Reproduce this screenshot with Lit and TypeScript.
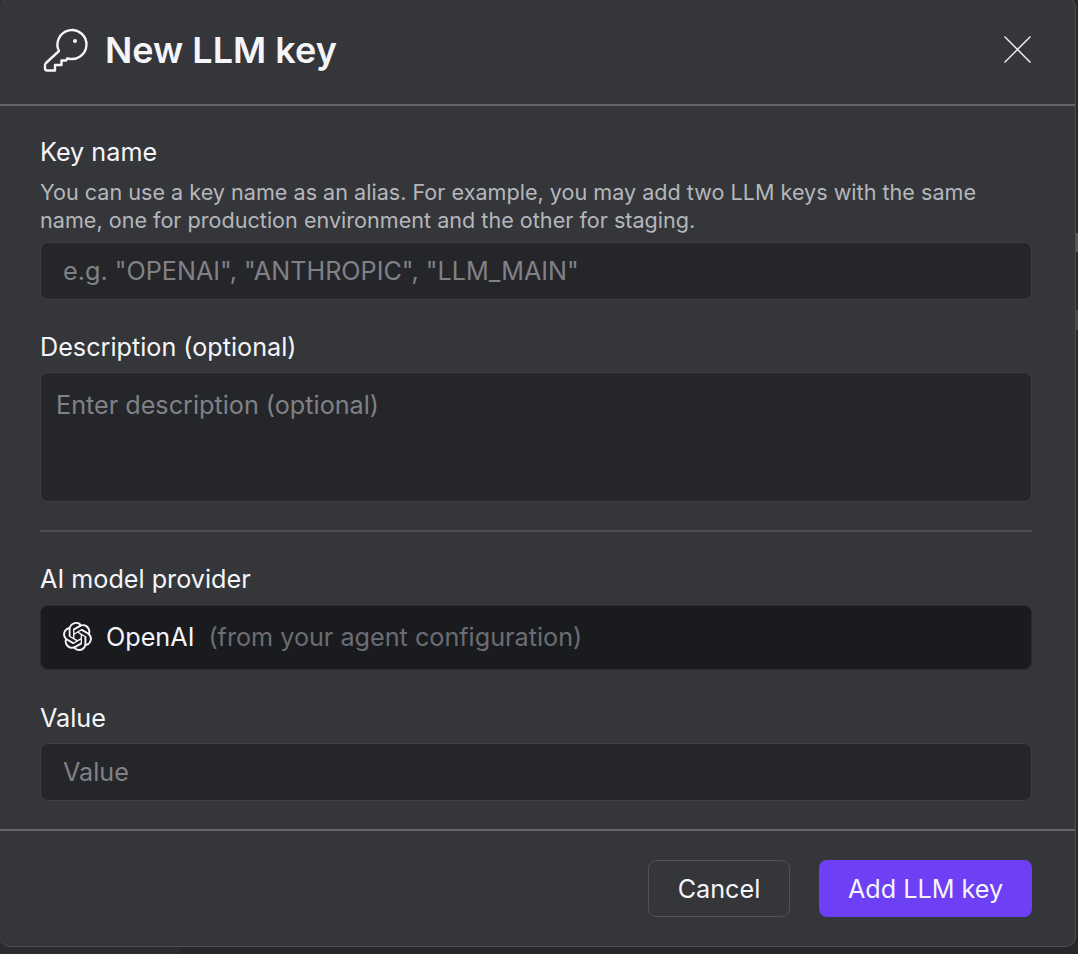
import { LitElement, css, html } from "lit";

const keyIcon = html`<svg class="key" viewBox="0 0 50 50" fill="none" stroke="currentColor" stroke-width="2.4" stroke-linejoin="round">
  <path d="M19 26A14.5 14.5 0 1 1 27.5 33.3L26 35.5H21.5V40H15V45.5H7Q5 45.5 5 43.5V40Q5 39 6 38Z" />
  <circle cx="35" cy="16" r="2" fill="currentColor" stroke="none" />
</svg>`;

const closeIcon = html`<svg class="close" viewBox="0 0 27 27" fill="none" stroke="currentColor" stroke-width="1.4">
  <path d="M.5 .5L26.5 26.5M26.5 .5L.5 26.5" />
</svg>`;

const openAiIcon = html`<svg class="openai" viewBox="0 0 24 24" fill="currentColor">
  <path d="M22.2819 9.8211a5.9847 5.9847 0 0 0-.5157-4.9108 6.0462 6.0462 0 0 0-6.5098-2.9A6.0651 6.0651 0 0 0 4.9807 4.1818a5.9847 5.9847 0 0 0-3.9977 2.9 6.0462 6.0462 0 0 0 .7427 7.0966 5.98 5.98 0 0 0 .511 4.9107 6.051 6.051 0 0 0 6.5146 2.9001A5.9847 5.9847 0 0 0 13.2599 24a6.0557 6.0557 0 0 0 5.7718-4.2058 5.9894 5.9894 0 0 0 3.9977-2.9001 6.0557 6.0557 0 0 0-.7475-7.0729zm-9.022 12.6081a4.4755 4.4755 0 0 1-2.8764-1.0408l.1419-.0804 4.7783-2.7582a.7948.7948 0 0 0 .3927-.6813v-6.7369l2.02 1.1686a.071.071 0 0 1 .038.052v5.5826a4.504 4.504 0 0 1-4.4945 4.4944zm-9.6607-4.1254a4.4708 4.4708 0 0 1-.5346-3.0137l.142.0852 4.783 2.7582a.7712.7712 0 0 0 .7806 0l5.8428-3.3685v2.3324a.0804.0804 0 0 1-.0332.0615L9.74 19.9502a4.4992 4.4992 0 0 1-6.1408-1.6464zM2.3408 7.8956a4.485 4.485 0 0 1 2.3655-1.9728V11.6a.7664.7664 0 0 0 .3879.6765l5.8144 3.3543-2.0201 1.1685a.0757.0757 0 0 1-.071 0l-4.8303-2.7865A4.504 4.504 0 0 1 2.3408 7.872zm16.5963 3.8558L13.1038 8.364 15.1192 7.2a.0757.0757 0 0 1 .071 0l4.8303 2.7913a4.4944 4.4944 0 0 1-.6765 8.1042v-5.6772a.79.79 0 0 0-.407-.667zm2.0107-3.0231l-.142-.0852-4.7735-2.7818a.7759.7759 0 0 0-.7854 0L9.409 9.2297V6.8974a.0662.0662 0 0 1 .0284-.0615l4.8303-2.7866a4.4992 4.4992 0 0 1 6.6802 4.66zM8.3065 12.863l-2.02-1.1638a.0804.0804 0 0 1-.038-.0567V6.0742a4.4992 4.4992 0 0 1 7.3757-3.4537l-.142.0805L8.704 5.459a.7948.7948 0 0 0-.3927.6813zm1.0976-2.3654l2.602-1.4998 2.6069 1.4998v2.9994l-2.5974 1.4997-2.6067-1.4997Z" />
</svg>`;

/** New LLM key dialog */
export class AppRoot extends LitElement {
  override render() {
    return html`
      <section class="dialog">
        <header>
          ${keyIcon}
          <h2>New LLM key</h2>
          <button class="icon-btn" aria-label="Close">${closeIcon}</button>
        </header>

        <form>
          <label for="name">Key name</label>
          <p class="hint">
            You can use a key name as an alias. For example, you may add two LLM keys with the same
            name, one for production environment and the other for staging.
          </p>
          <input id="name" placeholder='e.g. "OPENAI", "ANTHROPIC", "LLM_MAIN"' />

          <label class="desc-label" for="desc">Description (optional)</label>
          <textarea id="desc" placeholder="Enter description (optional)"></textarea>

          <hr />

          <label>AI model provider</label>
          <div class="provider">
            ${openAiIcon}
            <span class="name">OpenAI</span>
            <span class="muted">(from your agent configuration)</span>
          </div>

          <label class="value-label" for="value">Value</label>
          <input id="value" placeholder="Value" />
        </form>

        <footer>
          <button class="btn cancel">Cancel</button>
          <button class="btn primary">Add LLM key</button>
        </footer>
      </section>
    `;
  }

  static override styles = css`
    :host {
      display: block;
      width: 1078px;
      height: 954px;
      overflow: hidden;
      background:
        linear-gradient(#55565c, #55565c) 1076px 233px / 2px 19px no-repeat,
        linear-gradient(#45464b, #45464b) 1076px 310px / 2px 20px no-repeat,
        linear-gradient(to right, #2b2c30 180px, #26272b 180px);
      font-family: Inter, "Liberation Sans", sans-serif;
      color: #f4f5f9;
    }

    .dialog {
      box-sizing: border-box;
      width: 1076px;
      height: 950px;
      margin-top: -3px;
      background: #35363a;
      border: 1px solid #4d4e54;
      border-left: 0;
      border-radius: 10px;
      display: flex;
      flex-direction: column;
    }

    header {
      box-sizing: border-box;
      height: 108px;
      flex: none;
      display: flex;
      align-items: center;
      padding: 0 44px 2px 40px;
      border-bottom: 2px solid #66666f;
    }

    .key {
      width: 50px;
      height: 50px;
      flex: none;
    }

    h2 {
      flex: 1;
      margin: 0 0 0 15px;
      font-size: 36px;
      font-weight: 600;
      line-height: 40px;
    }

    .icon-btn {
      padding: 0;
      border: 0;
      background: none;
      color: #f4f5f9;
      display: flex;
      margin-top: -1px;
    }

    .close {
      width: 27px;
      height: 27px;
    }

    form {
      flex: 1;
      display: flex;
      flex-direction: column;
      padding: 30px 43px 0 40px;
    }

    label {
      font-size: 25.2px;
      line-height: 32px;
      font-weight: 400;
    }

    .hint {
      margin: 10px 0 8px;
      font-size: 21.6px;
      line-height: 28px;
      color: #b4b6bc;
    }

    input,
    textarea {
      box-sizing: border-box;
      width: 100%;
      display: block;
      background: #25262a;
      border: 1px solid #3e3f44;
      border-radius: 8px;
      color: #f4f5f9;
      font: 400 25.2px/32px Inter, "Liberation Sans", sans-serif;
      outline: none;
    }

    input {
      height: 58px;
      padding: 0 22px;
    }

    textarea {
      height: 130px;
      padding: 16px 15px 14px;
      resize: none;
    }

    ::placeholder {
      color: #808186;
      opacity: 1;
    }

    .desc-label {
      margin: 31px 0 9px;
    }

    hr {
      width: 100%;
      height: 2px;
      margin: 28px 0 31px;
      border: 0;
      background: #4d4e54;
    }

    .provider {
      box-sizing: border-box;
      height: 65px;
      margin-top: 10px;
      padding: 0 22px 2px;
      display: flex;
      align-items: center;
      background: #1a1b1f;
      border: 1px solid #2b2c30;
      border-radius: 8px;
      font-size: 25.2px;
    }

    .openai {
      width: 29px;
      height: 29px;
      flex: none;
    }

    .name {
      margin-left: 14px;
    }

    .muted {
      margin-left: 14px;
      color: #6c6d73;
    }

    .value-label {
      margin: 32px 0 9px;
    }

    footer {
      flex: none;
      height: 117px;
      box-sizing: border-box;
      display: flex;
      justify-content: flex-end;
      align-items: flex-start;
      gap: 29px;
      padding: 29px 43px 0 0;
      border-top: 2px solid #66666f;
    }

    .btn {
      box-sizing: border-box;
      height: 57px;
      border-radius: 8px;
      color: #f4f5f9;
      font: 400 25.2px Inter, "Liberation Sans", sans-serif;
    }

    .cancel {
      width: 142px;
      background: transparent;
      border: 1px solid #505157;
    }

    .primary {
      width: 213px;
      background: #6d3ff5;
      border: 0;
    }
  `;
}

customElements.define("app-root", AppRoot);
